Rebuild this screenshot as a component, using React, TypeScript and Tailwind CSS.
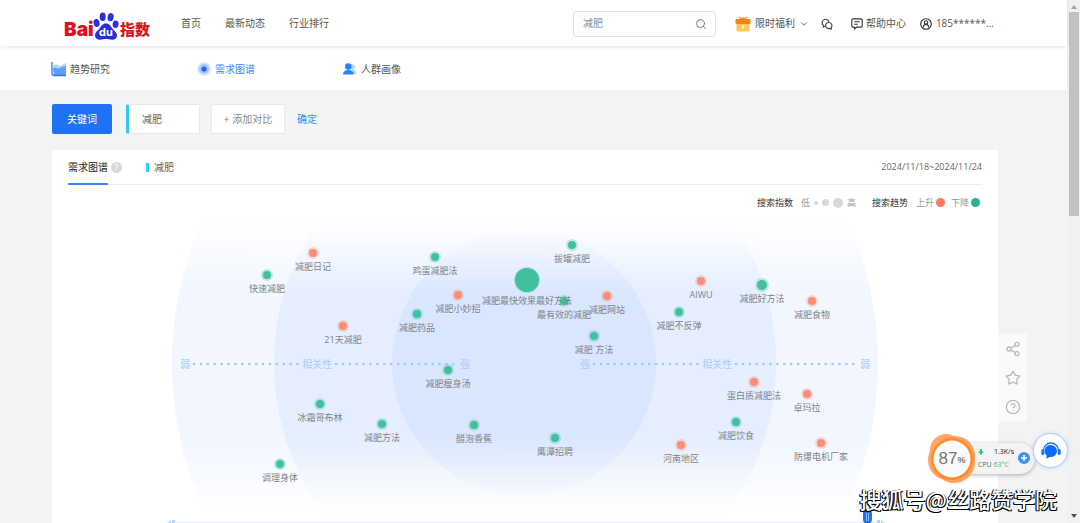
import React from "react";
import { ChevronDown, CircleHelp, Search, Share2, Star } from "lucide-react";

type Trend = "up" | "down";
type Node = { label: string; x: number; y: number; trend: Trend; size?: "md" | "lg" };

const nodes: Node[] = [
  { label: "减肥日记", x: 141, y: 33, trend: "up" },
  { label: "快速减肥", x: 95, y: 55, trend: "down" },
  { label: "鸡蛋减肥法", x: 263, y: 37, trend: "down" },
  { label: "拔罐减肥", x: 400, y: 25, trend: "down" },
  { label: "最有效的减肥", x: 392, y: 81, trend: "down" },
  { label: "减肥最快效果最好方法", x: 355, y: 60, trend: "down", size: "lg" },
  { label: "减肥小妙招", x: 286, y: 75, trend: "up" },
  { label: "减肥药品", x: 245, y: 94, trend: "down" },
  { label: "减肥网站", x: 435, y: 76, trend: "up" },
  { label: "减肥 方法", x: 422, y: 116, trend: "down" },
  { label: "AIWU", x: 529, y: 61, trend: "up" },
  { label: "减肥好方法", x: 590, y: 65, trend: "down", size: "md" },
  { label: "减肥食物", x: 640, y: 81, trend: "up" },
  { label: "减肥不反弹", x: 507, y: 92, trend: "down" },
  { label: "21天减肥", x: 171, y: 106, trend: "up" },
  { label: "减肥瘦身汤", x: 276, y: 150, trend: "down" },
  { label: "冰霜哥布林", x: 148, y: 184, trend: "down" },
  { label: "减肥方法", x: 210, y: 204, trend: "down" },
  { label: "醋泡香蕉", x: 302, y: 205, trend: "down" },
  { label: "鹰潭招聘", x: 383, y: 218, trend: "down" },
  { label: "调理身体", x: 108, y: 244, trend: "down" },
  { label: "蛋白质减肥法", x: 582, y: 162, trend: "up" },
  { label: "卓玛拉", x: 635, y: 174, trend: "up" },
  { label: "减肥饮食", x: 564, y: 202, trend: "down" },
  { label: "河南地区", x: 509, y: 225, trend: "up" },
  { label: "防爆电机厂家", x: 649, y: 223, trend: "up" },
];

function Logo() {
  return (
    <a href="#" aria-label="Baidu 指数" className="relative flex h-8 w-[86px] items-end justify-between font-['Inter','Noto_Sans_CJK_SC',sans-serif] text-[#e1101c]">
      <span className="text-[19px] leading-5 font-black">Bai</span>
      <span className="text-[15px] leading-5 font-black">指数</span>
      <svg viewBox="0 0 26 28" className="absolute bottom-0 left-[29px] h-7 w-[26px]" fill="#2a2fdc" aria-hidden="true">
        <ellipse cx="3.6" cy="11" rx="3" ry="4" transform="rotate(-12 3.6 11)" />
        <ellipse cx="9.7" cy="4.8" rx="3" ry="4.2" />
        <ellipse cx="17.6" cy="5.2" rx="3" ry="4.1" transform="rotate(10 17.6 5.2)" />
        <ellipse cx="22.6" cy="12.2" rx="3" ry="3.8" transform="rotate(8 22.6 12.2)" />
        <path d="M13 11.5c-3.300 0-4.600 2.600-6.500 5-2 2.500-4.700 4-4.500 7 .2 3 2.600 4.300 5 4.200 2.200-.1 3.800-.7 6-.7s3.800.6 6 .7c2.800.1 5-1.300 5-4.200 0-3.200-2.800-4.600-4.600-7-1.900-2.400-3-5-6.400-5z" />
      </svg>
      <span className="absolute bottom-0 left-[35px] text-[11px] leading-4 font-bold text-white">du</span>
    </a>
  );
}

function Gift() {
  return (
    <svg viewBox="0 0 16 16" className="size-4" aria-hidden="true">
      <path d="M4 1l4 3 4-3M8 4V1.500" stroke="#ff8a1e" strokeWidth="1.500" fill="none" />
      <path d="M1.500 7h13v7a1.500 1.500 0 0 1-1.500 1.500H3A1.500 1.500 0 0 1 1.500 14z" fill="#ffc857" />
      <rect x=".5" y="3" width="15" height="5" rx="1" fill="#ff7f1c" />
      <path d="M8 9v3.500" stroke="#fff" strokeWidth="1.500" />
    </svg>
  );
}

function Wechat() {
  return (
    <svg viewBox="0 0 14 14" className="size-3" fill="none" stroke="#444" strokeWidth="1.300" aria-hidden="true">
      <path d="M5 9.700l-2.300.9.400-1.800A4 4 0 1 1 9.200 4.600" />
      <path d="M9 5.200a3.600 3.600 0 1 0 1.400 6.900l1.700.6-.3-1.500A3.600 3.600 0 0 0 9 5.200z" />
    </svg>
  );
}

function MessageIcon() {
  return (
    <svg viewBox="0 0 12 12" className="size-3" fill="none" stroke="#333" strokeWidth="1.100" aria-hidden="true">
      <path d="M2 .9h8a1.200 1.200 0 0 1 1.200 1.200v5.800A1.200 1.200 0 0 1 10 9.100H5.500L3.500 11V9.100H2A1.200 1.200 0 0 1 .8 7.900V2.100A1.200 1.200 0 0 1 2 .9z" strokeLinejoin="round" />
      <path d="M3.200 3.700h5.600M3.200 6.200h3.600" />
    </svg>
  );
}

function UserBadge() {
  return (
    <svg viewBox="0 0 14 14" className="size-3" fill="none" stroke="#333" strokeWidth="1.300" aria-hidden="true">
      <circle cx="7" cy="7" r="6.200" />
      <circle cx="7" cy="5.200" r="2" />
      <path d="M3.800 10.800c.3-2.200 1.500-3.400 3.200-3.400s2.900 1.200 3.200 3.400" />
    </svg>
  );
}

function TrendIcon() {
  return (
    <svg viewBox="0 0 16 16" className="size-4" aria-hidden="true">
      <path d="M2 5l3-2 4 2 6-3v12H3z" fill="#b5d3fb" />
      <path d="M2 8c3-3 4 1 7-1s4-1 6-2v9H3z" fill="#5e9cf5" />
      <path d="M1 1v11.500A2 2 0 0 0 3 14.500h12" stroke="#2b7cf0" strokeWidth="1.300" fill="none" />
    </svg>
  );
}

function RadarIcon() {
  return (
    <svg viewBox="0 0 14 14" className="size-[14px]" aria-hidden="true">
      <circle cx="7" cy="7" r="7" fill="#d9e8ff" />
      <circle cx="7" cy="7" r="5" fill="#a3c7fc" />
      <circle cx="7" cy="7" r="2.600" fill="#1a6df0" />
    </svg>
  );
}

function PeopleIcon() {
  return (
    <svg viewBox="0 0 14 12" className="h-3 w-[14px]" aria-hidden="true">
      <path d="M8 1.500a2.800 2.800 0 0 1 2.500 5c1.500.6 3 1.800 3 4.500H9z" fill="#b8d5fd" />
      <circle cx="5.300" cy="3.600" r="3.300" fill="#2583f7" />
      <path d="M0 11.500c0-3 2-4.500 5.300-4.500s5.400 1.500 5.400 4.500z" fill="#2583f7" />
    </svg>
  );
}

function Dots({ long = false }: { long?: boolean }) {
  return (
    <svg className={`h-1 w-0 ${long ? "flex-8" : "flex-7"}`} aria-hidden="true">
      <line x1="4" y1="2" x2="100%" y2="2" stroke="#a0c6fd" strokeWidth="2.600" strokeLinecap="round" strokeDasharray="0 6.900" />
    </svg>
  );
}

function Rings() {
  return (
    <svg viewBox="0 0 706 300" className="absolute inset-0 h-[300px] w-[706px]" aria-hidden="true">
      <defs>
        <linearGradient id="fade" x1="0" y1="0" x2="0" y2="1">
          <stop offset="0" stopColor="#fff" />
          <stop offset="0.250" stopColor="#fff" stopOpacity="0" />
          <stop offset="0.720" stopColor="#fff" stopOpacity="0" />
          <stop offset="0.980" stopColor="#fff" />
        </linearGradient>
      </defs>
      <circle cx="353" cy="143" r="353" fill="#f1f6ff" />
      <circle cx="353" cy="143" r="251" fill="#e4eeff" />
      <circle cx="352" cy="143" r="132" fill="#d8e6ff" />
      <rect width="706" height="300" fill="url(#fade)" />
    </svg>
  );
}

function GraphNode({ label, x, y, trend, size }: Node) {
  const color = trend === "up" ? "bg-[#fa8d78] ring-[#fa8d78]/30" : "bg-[#41c09f] ring-[#41c09f]/30";
  const dot = size === "lg" ? "size-6 ring-1" : size === "md" ? "size-[10px] ring-2" : "size-2 ring-2";
  return (
    <div className="absolute size-0" style={{ left: x, top: y }}>
      <span className={`absolute -translate-1/2 rounded-full ${dot} ${color}`} />
      <span className={`absolute -translate-x-1/2 text-[9px] leading-3 whitespace-nowrap text-[#808488] ${size === "lg" ? "top-[15px]" : "top-2"}`}>{label}</span>
    </div>
  );
}

function Gauge() {
  return (
    <svg viewBox="0 0 50 52" className="absolute inset-0 h-[52px] w-[50px]" aria-hidden="true">
      <circle cx="19" cy="18" r="16" fill="#ff9d57" fillOpacity=".9" />
      <circle cx="28" cy="24" r="20" fill="#ff9a50" fillOpacity=".9" />
      <circle cx="21" cy="28" r="20" fill="#ffa566" />
      <circle cx="27" cy="30" r="21" fill="#ff9a50" fillOpacity=".9" />
      <circle cx="25" cy="27" r="21" fill="#ff8b2e" />
      <circle cx="25" cy="27" r="18.500" fill="#fafafa" />
    </svg>
  );
}

function MonitorWidget() {
  return (
    <div className="absolute right-[45px] bottom-[39px] flex h-[52px] w-[108px] items-center">
      <div className="ml-6 flex h-[31px] flex-1 items-center rounded-full bg-[#f3f3f3] pr-[5px] pl-[27px] shadow-[0_1px_4px_rgba(0,0,0,0.3)]">
        <div className="flex-1 text-[7px] leading-[13px]">
          <p className="flex items-center justify-between pr-1 text-[#222]">
            <svg viewBox="0 0 6 6" className="size-[6px]" aria-hidden="true"><path d="M2 0h2v2.500h2L3 6 0 2.500h2z" fill="#2ec471" /></svg>
            1.3K/s
          </p>
          <p className="whitespace-nowrap text-[#666]">CPU <span className="text-[#2ec471]">63°C</span></p>
        </div>
        <button aria-label="加速" className="flex size-3 shrink-0 items-center justify-center rounded-full bg-[#3c94f8]">
          <svg viewBox="0 0 8 8" className="size-2" aria-hidden="true"><path d="M4 1v6M1 4h6" stroke="#fff" strokeWidth="1.500" /></svg>
        </button>
      </div>
      <Gauge />
      <p className="absolute inset-y-0 left-0 flex w-[50px] items-center justify-center pt-[2px] font-['Liberation_Sans',sans-serif] text-[17px] text-[#777]">
        87<span className="pt-1 text-[9px] font-bold">%</span>
      </p>
    </div>
  );
}

function Headset() {
  return (
    <svg viewBox="0 0 20 18" className="h-[18px] w-5" aria-hidden="true">
      <path d="M2.500 8.500a7.500 7.500 0 0 1 15 0" stroke="#1677ff" strokeWidth="1.300" fill="none" />
      <rect x=".3" y="7" width="3" height="6" rx="1.500" fill="#1677ff" />
      <rect x="16.700" y="7" width="3" height="6" rx="1.500" fill="#1677ff" />
      <path d="M10 3a6 6 0 1 1 0 12c-.6 0-1 0-1.500-.2-1 1-2 1.500-3.500 1.700.6-.8.8-1.800.7-3A6 6 0 0 1 10 3z" fill="#0a6cff" />
    </svg>
  );
}

export default function App() {
  return (
    <div className="relative flex h-screen overflow-hidden bg-[#f3f3f3] font-['Open_Sans','Noto_Sans_CJK_SC',sans-serif] text-[10px] text-[#555]">
      <div className="min-w-0 flex-1">
        <header className="relative z-10 flex h-[46px] items-center bg-white pt-px pr-[73px] pl-16 shadow-[0_1px_4px_rgba(0,0,0,0.1)]">
          <Logo />
          <nav className="ml-[31px] flex gap-6">
            <a href="#">首页</a>
            <a href="#">最新动态</a>
            <a href="#">行业排行</a>
          </nav>
          <label className="ml-auto flex h-[26px] w-[143px] items-center rounded border border-[#dfe1ee] pr-2 pl-[9px]">
            <input aria-label="搜索" defaultValue="减肥" className="min-w-0 flex-1 text-[#8a8f9c] outline-none" />
            <Search className="size-3 text-[#777d8c]" />
          </label>
          <button className="ml-[19px] flex items-center gap-1"><Gift />限时福利<ChevronDown className="size-[10px]" /></button>
          <button aria-label="微信" className="ml-3"><Wechat /></button>
          <a href="#" className="ml-[18px] flex items-center gap-[3px]"><MessageIcon />帮助中心</a>
          <a href="#" className="ml-[14px] flex items-center gap-1"><UserBadge />185******...</a>
        </header>

        <nav className="flex h-11 items-center bg-white pt-[2px] pl-[51px]">
          <a href="#" className="flex w-[146px] items-center gap-[3px]"><TrendIcon />趋势研究</a>
          <a href="#" className="flex w-[146px] items-center gap-1 text-[#3c86f8]"><RadarIcon />需求图谱</a>
          <a href="#" className="flex items-center gap-1"><PeopleIcon />人群画像</a>
        </nav>

        <main className="pr-[69px] pl-[52px]">
          <div className="flex items-center py-[14px]">
            <button className="h-[30px] w-[60px] rounded-xs bg-[#1f72f2] text-white">关键词</button>
            <div className="ml-[14px] flex h-[30px] w-[74px] items-center rounded-xs border border-l-3 border-[#e8e8e8] border-l-[#30c6fa] bg-white pl-[13px] text-[#666]">减肥</div>
            <button className="ml-[11px] h-[30px] w-[74px] rounded-xs border border-[#e8e8e8] bg-white text-[#888]">+ 添加对比</button>
            <button className="ml-3 text-[#3c86f8]">确定</button>
          </div>

          <section className="mt-[2px] bg-white px-4 pb-10">
            <div className="flex h-[35px] border-b border-[#eee]">
              <h2 className="-mb-px flex items-center border-b-2 border-[#3c86f8] pt-[2px] text-[10px] text-[#222]">需求图谱</h2>
              <span className="mt-3 ml-[3px] flex size-[11px] items-center justify-center rounded-full bg-[#d8d8d8] text-[9px] text-white">?</span>
              <span className="ml-6 flex items-center gap-[5px] pt-px text-[#666]"><i className="h-[9px] w-[3px] bg-[#30c6fa]" />减肥</span>
              <time className="ml-auto self-center text-[9px] text-[#666]">2024/11/18~2024/11/24</time>
            </div>
            <div className="flex h-[35px] items-center justify-end gap-1 pr-[2px] text-[9px] text-[#999]">
              <span className="mr-1 text-[#333]">搜索指数</span>
              <span>低</span>
              <i className="size-1 rounded-full bg-[#d8d8d8]" />
              <i className="size-[7px] rounded-full bg-[#d8d8d8]" />
              <i className="size-[10px] rounded-full bg-[#d8d8d8]" />
              <span>高</span>
              <span className="mr-1 ml-3 text-[#333]">搜索趋势</span>
              <span className="flex items-center gap-[2px]">上升<i className="size-[9px] rounded-full bg-[#fa7a62]" /></span>
              <span className="ml-[2px] flex items-center gap-[2px]">下降<i className="size-[9px] rounded-full bg-[#28b48e]" /></span>
            </div>
            <div className="relative mx-auto h-[300px] w-[706px]">
              <Rings />
              <div className="relative flex items-center px-2 pt-[136px] text-[10px] leading-4 text-[#a8cbfd]">
                <div className="flex flex-1 items-center">弱<Dots />相关性<Dots long />强</div>
                <div className="w-[110px]" />
                <div className="flex flex-1 items-center">强<Dots />相关性<Dots long />弱</div>
              </div>
              {nodes.map((n) => <GraphNode key={n.label} {...n} />)}
            </div>
            <div className="relative mx-auto mt-[2px] h-4 w-[706px] border-t border-[#e4eeff]">
              <svg viewBox="0 0 10 8" className="absolute -top-[3px] -left-[6px] h-2 w-[10px]" fill="#b8d5fd" aria-hidden="true">
                <path d="M0 4l5-4v8zM6 0h3v8H6z" />
              </svg>
              <button aria-label="时间滑块" className="absolute -top-[14px] right-[6px] flex h-[15px] w-[9px] items-center justify-center gap-px rounded-full bg-[#1f72f2]">
                <i className="h-2 w-px bg-[#8db9fa]" /><i className="h-2 w-px bg-[#8db9fa]" />
              </button>
              <svg viewBox="0 0 10 8" className="absolute -top-[3px] -right-[8px] h-2 w-[10px]" fill="#b8d5fd" aria-hidden="true">
                <path d="M1 0h3v8H1zM5 0l5 4-5 4z" />
              </svg>
            </div>
          </section>
        </main>
      </div>

      <aside className="absolute top-[334px] right-[53px] flex w-[29px] flex-col items-center gap-[13px] bg-[#fafafa] py-[7px] text-[#bbb]">
        <button aria-label="分享"><Share2 className="size-4" /></button>
        <button aria-label="收藏"><Star className="size-4" /></button>
        <button aria-label="帮助"><CircleHelp className="size-4" /></button>
      </aside>

      <MonitorWidget />
      <button aria-label="客服" className="absolute right-3 bottom-[55px] flex size-[35px] items-center justify-center rounded-full border border-[#a9cdfd] bg-white shadow-[0_0_4px_rgba(60,130,250,0.25)]">
        <Headset />
      </button>
      <p className="absolute right-[23px] bottom-[11px] z-20 font-['Noto_Sans_CJK_SC',sans-serif] text-[22px] leading-7 font-medium whitespace-nowrap text-white [text-shadow:-1px_0_0_#000,-1px_1px_0_#000,1px_1px_0_#000]">搜狐号@丝路赞学院</p>

      <div className="flex w-[13px] flex-col items-center bg-[#f1f1f1] text-[#777]">
        <svg viewBox="0 0 6 4" className="mt-[5px] mb-[3px] h-1 w-[6px]" fill="#a3a3a3" aria-hidden="true"><path d="M0 4l3-4 3 4z" /></svg>
        <div className="h-[204px] w-[10px] bg-[#c1c1c1]" />
        <svg viewBox="0 0 6 4" className="mt-auto mb-[5px] h-1 w-[6px]" fill="#505050" aria-hidden="true"><path d="M0 0h6L3 4z" /></svg>
      </div>
    </div>
  );
}
